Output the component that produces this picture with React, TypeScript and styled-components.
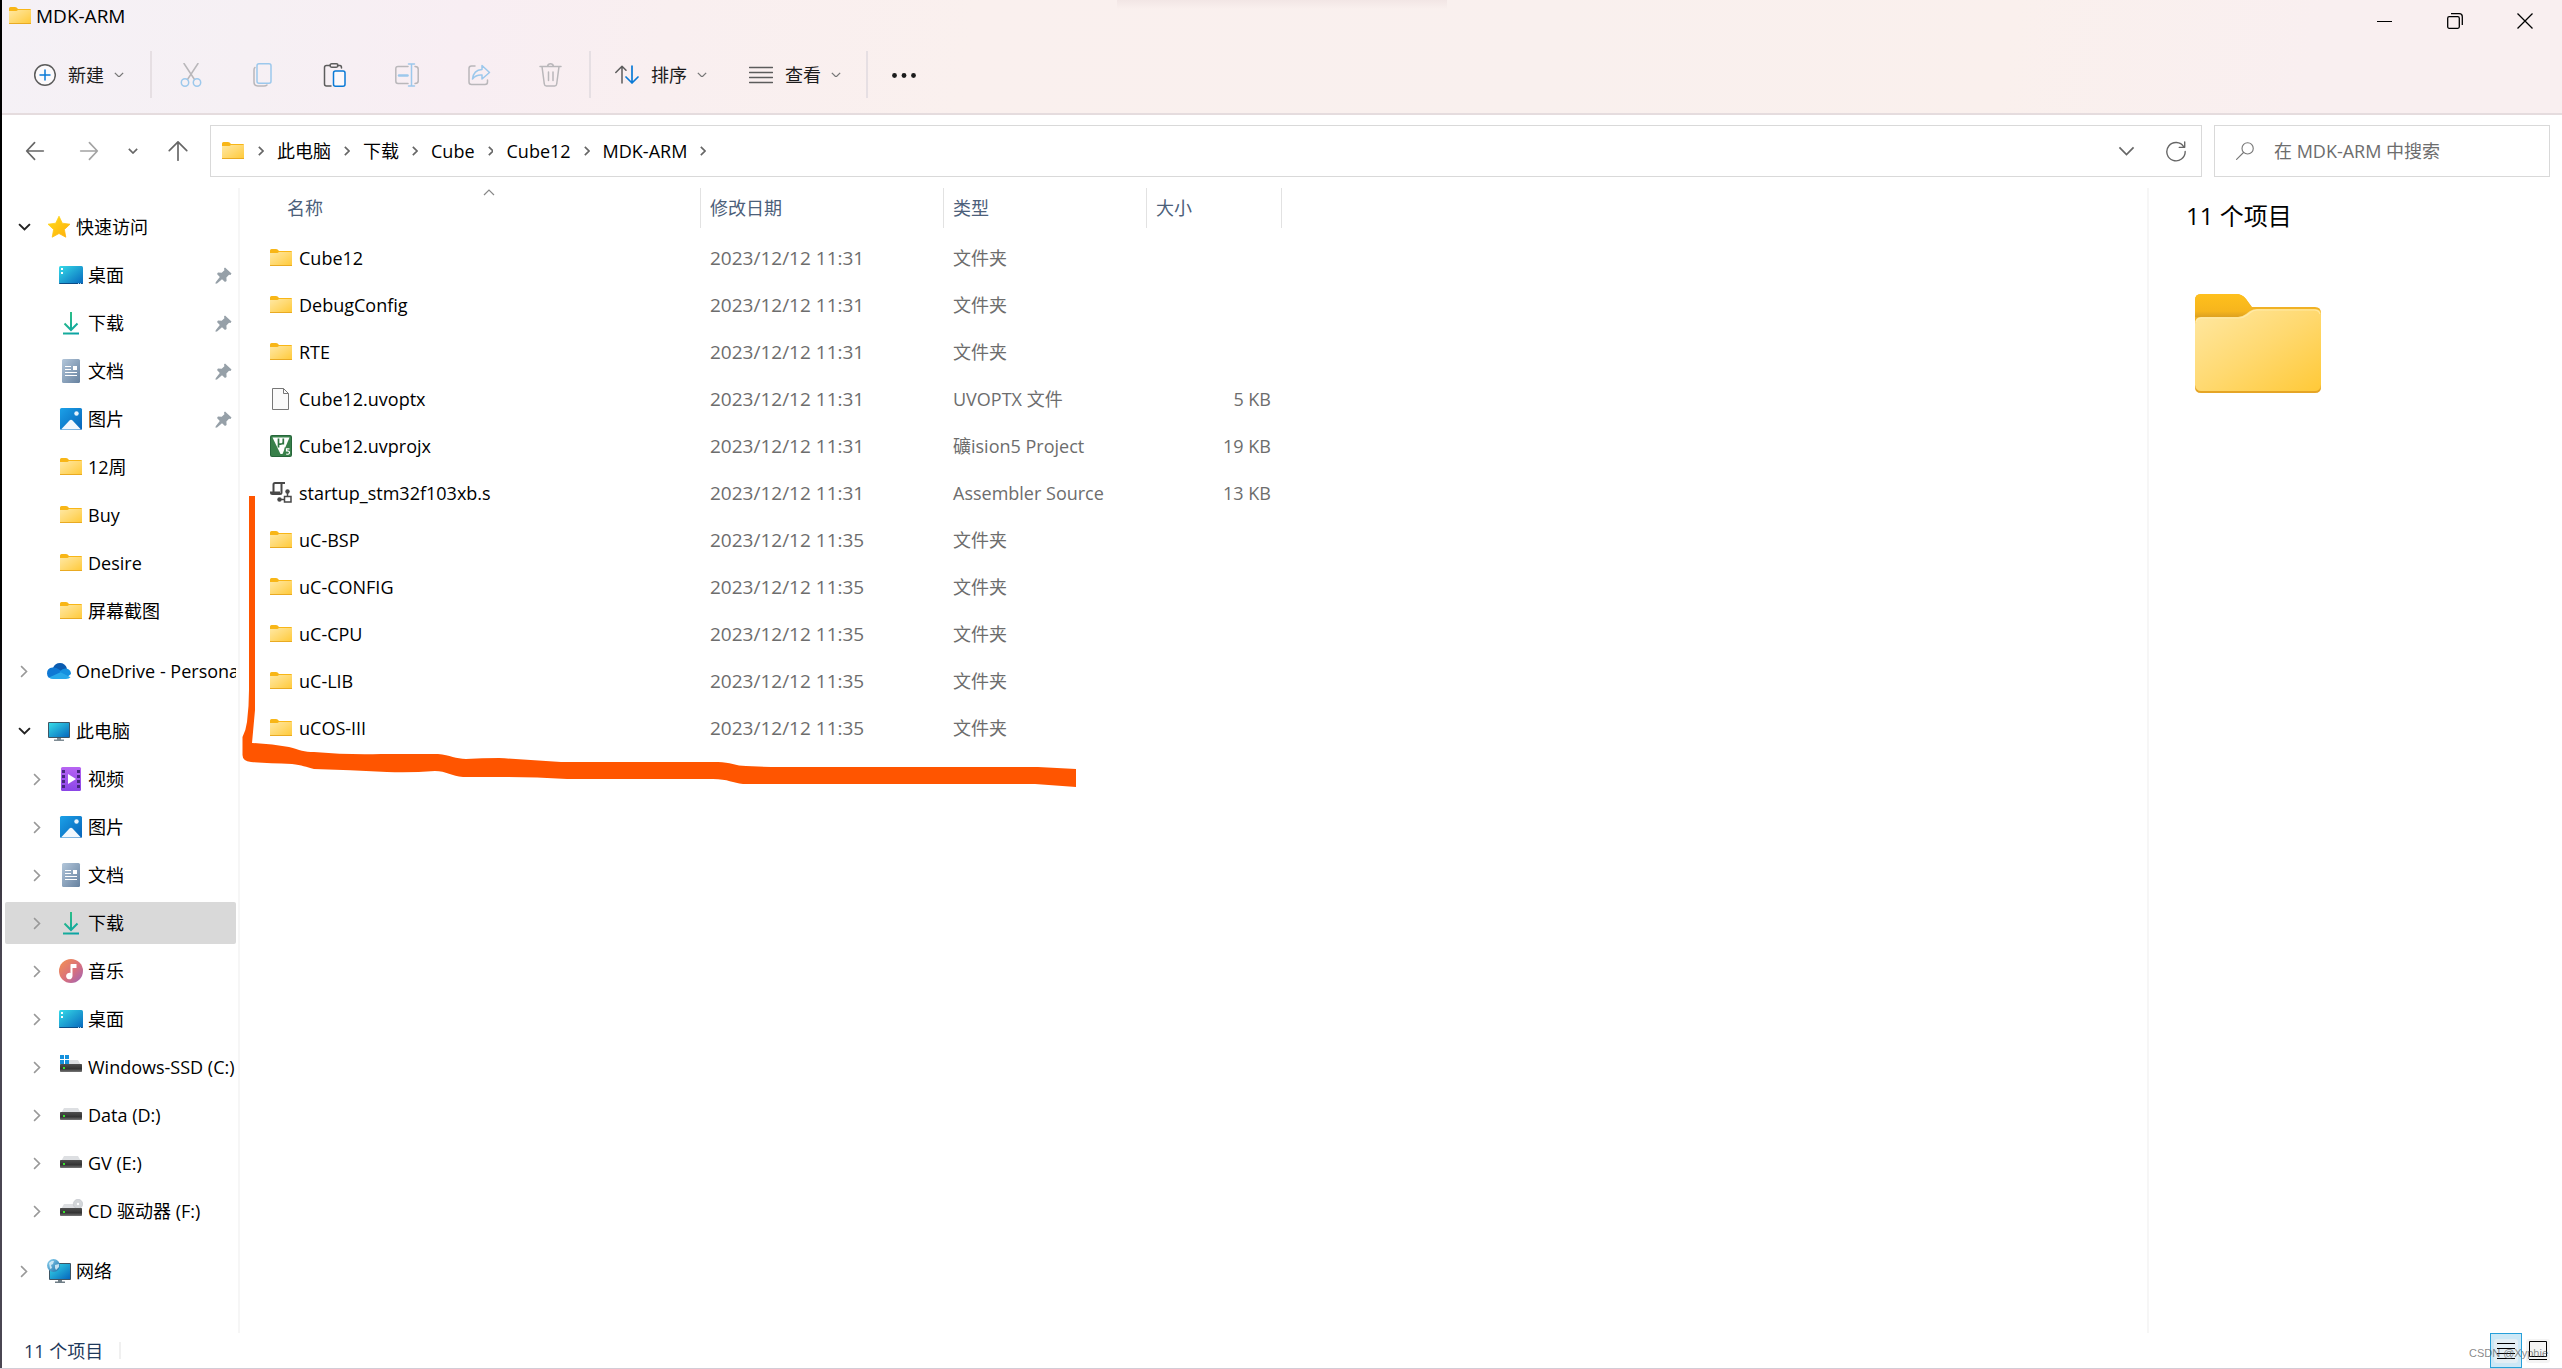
import React from "react";
import styled, { createGlobalStyle, css } from "styled-components";

const GlobalStyle = createGlobalStyle`
  * { box-sizing: border-box; }
  body {
    margin: 0;
    background: #fff;
    color: #000;
    font-family: "Open Sans", "Noto Sans CJK SC", sans-serif;
    font-size: 18px;
    line-height: 26px;
  }
  button, input { font: inherit; color: inherit; }
  svg { display: block; flex: none; }
`;

/* ---------- layout ---------- */

const Window = styled.div`
  position: relative;
  display: flex;
  flex-direction: column;
  min-height: 100vh;
  padding-left: 2px;
  background: linear-gradient(#000 0, #000 45%, #2a2630 57%, #4a4652 70%, #4a4652 100%) left / 2px 100% no-repeat;
  border-bottom: 1px solid #d3ccd6;
`;

const Chrome = styled.header`
  background:
    linear-gradient(#f2e6e5, rgba(249, 239, 238, 0)) top center / 330px 9px no-repeat,
    linear-gradient(100deg, #f5f1f6 0%, #f6f0f4 10%, #f8eef3 18%, #f9eff0 26%, #faf0ee 38%, #f9f0ee 60%, #faf0ed 78%, #f9eff0 90%, #f9eff0 100%);
  border-bottom: 2px solid #e5dcde;
`;

const TitleBar = styled.div`
  display: flex;
  justify-content: space-between;
  height: 42px;
  padding: 0 2px 0 6px;
`;

const Title = styled.h1`
  display: flex;
  align-items: center;
  gap: 4px;
  height: 32px;
  margin: 0;
  font-size: 19px;
  font-weight: 400;
`;

const CaptionButtons = styled.div`
  display: flex;
`;

const IconButton = styled.button<{ $w?: number }>`
  display: inline-flex;
  align-items: center;
  justify-content: center;
  flex: none;
  width: ${(p) => p.$w ?? 72}px;
  padding: 0;
  border: 0;
  background: none;
`;

const CommandBar = styled.div`
  display: flex;
  align-items: stretch;
  height: 71px;
  padding: 9px 0 15px;
`;

const Command = styled.button<{ $left: number; $right: number }>`
  display: flex;
  align-items: center;
  gap: 12px;
  padding: 0 ${(p) => p.$right}px 0 ${(p) => p.$left}px;
  border: 0;
  background: none;
  color: #1b1b1b;
  svg:last-child { margin-left: -2px; }
`;

const Divider = styled.span`
  width: 2px;
  margin: 0 3px 0 2px;
  background: #e6dfe3;
`;

const NavBar = styled.nav`
  display: flex;
  align-items: center;
  height: 73px;
  padding: 10px 12px 11px 6px;
`;

const AddressBox = styled.div`
  display: flex;
  align-items: center;
  flex: 1;
  height: 52px;
  margin: 0 12px 0 4px;
  padding: 0 0 0 10px;
  border: 1px solid #d9d9d9;
`;

const Crumbs = styled.ol`
  display: flex;
  align-items: center;
  flex: 1;
  margin: 0;
  padding: 0;
  list-style: none;
`;

const Crumb = styled.li`
  display: flex;
  align-items: center;
  a { color: #000; text-decoration: none; }
`;

const CrumbArrow = styled.span`
  display: flex;
  justify-content: center;
  width: 32px;
`;

const SearchBox = styled.label`
  display: flex;
  align-items: center;
  gap: 20px;
  width: 336px;
  height: 52px;
  padding: 0 21px;
  border: 1px solid #d9d9d9;
`;

const SearchInput = styled.input`
  flex: 1;
  min-width: 0;
  padding: 0;
  border: 0;
  outline: 0;
  background: none;
  &::placeholder { color: #6d6d6d; opacity: 1; }
`;

const Main = styled.div`
  display: flex;
  flex: 1;
`;

const Sidebar = styled.aside`
  flex: none;
  width: 238px;
  padding: 18px 2px 0 3px;
  border-right: 2px solid #f6f6f6;
`;

const Group = styled.ul`
  display: flex;
  flex-direction: column;
  gap: 6px;
  margin: 0 0 18px;
  padding: 0;
  list-style: none;
`;

const TreeRow = styled.li<{ $child?: boolean; $selected?: boolean }>`
  display: flex;
  align-items: center;
  height: 42px;
  padding-left: ${(p) => (p.$child ? 20 : 7)}px;
  border-radius: 2px;
  overflow: hidden;
  white-space: nowrap;
  ${(p) => p.$selected && css`background: #d9d9d9;`}
`;

const Toggle = styled.span`
  display: flex;
  justify-content: center;
  flex: none;
  width: 24px;
`;

const TreeIcon = styled.span<{ $child?: boolean }>`
  display: flex;
  flex: none;
  margin-left: ${(p) => (p.$child ? 10 : 11)}px;
  margin-right: 5px;
`;

const TreeLabel = styled.span`
  flex: 1;
  overflow: hidden;
`;

const PinSlot = styled.span`
  flex: none;
  padding-right: 4px;
`;

const Files = styled.main`
  flex: 1;
  min-width: 0;
`;

const FileTable = styled.table`
  table-layout: fixed;
  width: 1042px;
  border-spacing: 0;
  tbody::before { content: ""; display: block; height: 6px; }
`;

const HeadCell = styled.th<{ $w: number; $pad: number }>`
  position: relative;
  width: ${(p) => p.$w}px;
  height: 40px;
  padding: 0 0 0 ${(p) => p.$pad}px;
  border-right: 1px solid #e2e2e2;
  color: #4c607a;
  font-weight: 400;
  text-align: left;
`;

const SortMark = styled.span`
  position: absolute;
  top: 1px;
  left: 243px;
`;

const Cell = styled.td<{ $right?: boolean; $large?: boolean }>`
  height: 47px;
  padding: 0 ${(p) => (p.$right ? 11 : 0)}px 0 9px;
  color: #6d6d6d;
  font-size: ${(p) => (p.$large ? 19 : 18)}px;
  text-align: ${(p) => (p.$right ? "right" : "left")};
  white-space: nowrap;
`;

const NameCell = styled(Cell)`
  padding-left: 29px;
  color: #000;
`;

const FileName = styled.span`
  display: flex;
  align-items: center;
  gap: 6px;
`;

const Preview = styled.aside`
  flex: none;
  width: 415px;
  padding: 12px 37px;
  border-left: 2px solid #f6f6f6;
`;

const PreviewTitle = styled.h2`
  margin: 0 0 62px;
  font-size: 24px;
  font-weight: 400;
  line-height: 32px;
`;

const PreviewArt = styled.div`
  padding-left: 9px;
`;

const StatusBar = styled.footer`
  display: flex;
  align-items: center;
  justify-content: space-between;
  height: 35px;
  padding: 0 8px 0 22px;
  color: #1e395b;
`;

const StatusCount = styled.span`
  display: flex;
  align-items: center;
  gap: 16px;
  &::after { content: ""; width: 2px; height: 17px; background: #f0f0f0; }
`;

const ViewModes = styled.div`
  display: flex;
  align-self: stretch;
`;

const ViewButton = styled.button<{ $active?: boolean }>`
  display: flex;
  align-items: center;
  justify-content: center;
  width: 32px;
  padding: 0;
  border: 1px solid ${(p) => (p.$active ? "#26a0da" : "transparent")};
  background: ${(p) => (p.$active ? "#cce8f6" : "transparent")};
`;

const Watermark = styled.span`
  position: absolute;
  right: 14px;
  bottom: 5px;
  color: rgba(70, 70, 70, 0.65);
  font: 11px/20px "Liberation Sans", sans-serif;
  pointer-events: none;
`;

const InkMark = styled.svg`
  position: absolute;
  top: 490px;
  left: 240px;
  pointer-events: none;
`;

const SharedDefs = styled.svg`
  position: absolute;
`;

/* ---------- icons ---------- */

const Gradients = () => (
  <SharedDefs width="0" height="0" aria-hidden="true">
    <defs>
      <linearGradient id="folder" x1="0" y1="0" x2="1" y2="1">
        <stop offset="0" stopColor="#ffe8a3" />
        <stop offset=".5" stopColor="#ffd970" />
        <stop offset="1" stopColor="#ffc937" />
      </linearGradient>
      <linearGradient id="screen" x1="0" y1="0" x2="1" y2="1">
        <stop offset="0" stopColor="#36dbe8" />
        <stop offset="1" stopColor="#0667bd" />
      </linearGradient>
      <linearGradient id="down" gradientUnits="userSpaceOnUse" x1="4" y1="2" x2="20" y2="23">
        <stop offset="0" stopColor="#33c481" />
        <stop offset="1" stopColor="#08a0a8" />
      </linearGradient>
      <linearGradient id="doc" x1="0" y1="0" x2="1" y2="1">
        <stop offset="0" stopColor="#b2c6da" />
        <stop offset="1" stopColor="#66819f" />
      </linearGradient>
      <linearGradient id="photo" x1="0" y1="0" x2="1" y2="1">
        <stop offset="0" stopColor="#1ba1e8" />
        <stop offset="1" stopColor="#0863b8" />
      </linearGradient>
      <linearGradient id="video" x1="0" y1="0" x2="0" y2="1">
        <stop offset="0" stopColor="#b765f2" />
        <stop offset="1" stopColor="#8a45e6" />
      </linearGradient>
      <linearGradient id="music" x1="0" y1="0" x2="1" y2="1">
        <stop offset="0" stopColor="#f59350" />
        <stop offset=".55" stopColor="#d9707c" />
        <stop offset="1" stopColor="#9c62ba" />
      </linearGradient>
      <linearGradient id="star" x1="0" y1="0" x2="1" y2="1">
        <stop offset="0" stopColor="#ffdc1c" />
        <stop offset="1" stopColor="#ffae0a" />
      </linearGradient>
      <linearGradient id="drive" x1="0" y1="0" x2="0" y2="1">
        <stop offset="0" stopColor="#4f4f4f" />
        <stop offset=".6" stopColor="#333" />
        <stop offset="1" stopColor="#777" />
      </linearGradient>
      <linearGradient id="globe" x1="0" y1="0" x2="1" y2="1">
        <stop offset="0" stopColor="#8ed4f2" />
        <stop offset="1" stopColor="#1a6fa8" />
      </linearGradient>
      <linearGradient id="tab" x1="0" y1="0" x2="0" y2="1">
        <stop offset="0" stopColor="#ffc01c" />
        <stop offset=".75" stopColor="#f6b51d" />
        <stop offset="1" stopColor="#dda121" />
      </linearGradient>
    </defs>
  </SharedDefs>
);

const Folder = () => (
  <svg width="24" height="24" viewBox="0 0 24 24">
    <path d="M1 4.500Q1 3 2.500 3H7q1 0 1.600.6L10 5h12q1 0 1 1v2H1z" fill="#f8b617" />
    <path d="M1 7h7.500l1.500-1H23v14H1z" fill="url(#folder)" />
    <path d="M1 19h22v.5q0 .5-.5.500h-21q-.5 0-.5-.5z" fill="#e9aa22" />
  </svg>
);

const BigFolder = () => (
  <svg width="126" height="99" viewBox="0 0 126 99">
    <path d="M0 6Q0 0 6 0H41q6 0 10 5l6 8h63q6 0 6 6v20H0z" fill="#f0b124" />
    <path d="M0 6Q0 0 6 0H41q6 0 10 5l6 9q-6 9-14 9H0z" fill="url(#tab)" />
    <path d="M0 30q0-7 6-7H43q4 0 8-3l4-3q3-2 7-2h58q6 0 6 6v71q0 6-6 6H6q-6 0-6-6z" fill="url(#folder)" />
    <path d="M1 28q1-4 6-4H44q4 0 8-3l4-3q3-2 6-2h57q5 0 6 4" fill="none" stroke="#ffeeb4" strokeWidth="1.200" opacity=".7" />
    <path d="M0 91q1 6 6 6h114q5 0 6-6v2q0 6-6 6H6q-6 0-6-6z" fill="#e5a526" />
  </svg>
);

const Desktop = () => (
  <svg width="24" height="24" viewBox="0 0 24 24">
    <rect y="3" width="24" height="18" rx="1.500" fill="url(#screen)" />
    <path d="M0 20h24v.2q0 .8-1.200.8H1.200Q0 21 0 20.200z" fill="#0b4c86" />
    <path d="M2 5h2v2H2zM2 9h2v2H2z" fill="#fff" />
    <path d="M19 20h1v1h-1zM21 20h1v1h-1z" fill="#9fd4f5" />
  </svg>
);

const Download = () => (
  <svg width="24" height="24" viewBox="0 0 24 24" fill="none" stroke="url(#down)" strokeWidth="2">
    <path d="M12 1v18M5.500 12.500l6.500 6.500 6.500-6.500M4 22.500h16" />
  </svg>
);

const Doc = () => (
  <svg width="24" height="24" viewBox="0 0 24 24">
    <rect x="3" width="18" height="24" rx="1.500" fill="url(#doc)" />
    <path d="M6 7.500h6M6 10.500h6M6 13.500h12M6 16.500h12" stroke="#fff" strokeWidth="1.200" />
    <rect x="14" y="7" width="4" height="4" fill="#fff" />
  </svg>
);

const Photo = () => (
  <svg width="24" height="24" viewBox="0 0 24 24">
    <rect x="1" y="1" width="22" height="22" rx="1.500" fill="url(#photo)" />
    <path d="M2 22.500 10.500 13.500q1.500-1.500 3 0L22 22.500z" fill="#f3f8fd" />
    <circle cx="17.500" cy="6.500" r="2.200" fill="#e8f4fd" />
  </svg>
);

const Video = () => (
  <svg width="24" height="24" viewBox="0 0 24 24">
    <rect x="2" width="20" height="24" rx="1.500" fill="url(#video)" />
    <path d="M3 3h3v3H3zM3 8h3v3H3zM3 13h3v3H3zM3 18h3v3H3zM18 3h3v3h-3zM18 8h3v3h-3zM18 13h3v3h-3zM18 18h3v3h-3z" fill="#46287e" />
    <path d="M9 7l8 5-8 5z" fill="#fff" />
  </svg>
);

const Music = () => (
  <svg width="24" height="24" viewBox="0 0 24 24">
    <circle cx="12" cy="12" r="12" fill="url(#music)" />
    <path d="M12 5h5.500v4H13.500v8a3.200 3.200 0 1 1-2-2.900V5.500z" fill="#fff" />
  </svg>
);

const Star = () => (
  <svg width="24" height="24" viewBox="0 0 24 24">
    <path d="M12 1.200l3.300 7 7.700 1-5.600 5.300 1.400 7.700L12 18.500l-6.800 3.700 1.400-7.700L1 9.200l7.700-1z" fill="url(#star)" stroke="url(#star)" strokeWidth=".8" strokeLinejoin="round" />
  </svg>
);

const Cloud = () => (
  <svg width="24" height="24" viewBox="0 0 24 24">
    <path d="M6 9Q8 4 13 4q5 0 7 5.500L14 14z" fill="#0a5bb0" />
    <path d="M5.500 8.500Q9 8 12 10.500l5 3.500L2 19q-2-2-2-4.500 0-5.500 5.500-6z" fill="#0f78d4" />
    <path d="M12.500 12.500Q17 8 21 10q3 1.500 3 5l-5 4z" fill="#1590df" />
    <path d="M2 18.500l11.500-5.200 10 5Q22 20 19 20H6Q3.500 20 2 18.500z" fill="#28a8ea" />
  </svg>
);

const Monitor = () => (
  <svg width="24" height="24" viewBox="0 0 24 24">
    <rect x="1" y="3" width="22" height="16" rx="1" fill="#3e5565" />
    <rect x="2" y="4" width="20" height="14" fill="url(#screen)" />
    <path d="M10 19h4v1.500h3V22H7v-1.500h3z" fill="#7f8c94" />
  </svg>
);

const Drive = ({ kind }: { kind?: "system" | "disc" }) => (
  <svg width="24" height="24" viewBox="0 0 24 24">
    <path d="M5 5h14l4 7H1z" fill="#dddfe2" />
    {kind === "system" && (
      <>
        <path d="M0 0h10v9H0z" fill="#fff" />
        <path d="M1 0h4v4H1zM6 0h4v4H6zM1 5h4v4H1zM6 5h4v4H6z" fill="#1590dc" />
      </>
    )}
    {kind === "disc" && (
      <>
        <circle cx="19" cy="5" r="4.700" fill="#d3d6d9" stroke="#bfc3c7" strokeWidth=".6" />
        <circle cx="19" cy="5" r="1.200" fill="#fff" />
      </>
    )}
    <rect x="1" y="9" width="22" height="8" rx=".8" fill="url(#drive)" />
    <rect x="4" y="12" width="2" height="2" fill="#38e22c" />
  </svg>
);

const Network = () => (
  <svg width="24" height="24" viewBox="0 0 24 24">
    <rect x="2" y="4" width="22" height="17" rx="1" fill="#3e5565" />
    <rect x="3" y="5" width="20" height="15" fill="url(#screen)" />
    <path d="M11 21h4v1.500h3V24H8v-1.500h3z" fill="#6f7d86" />
    <circle cx="6.500" cy="6.500" r="6.500" fill="url(#globe)" />
    <path d="M2 4q3-3 5-2l-1 3-2 1 1 3-2 1zM8 6l4-1 0 3-3 3-1-2z" fill="#e3f4fb" opacity=".8" />
  </svg>
);

const Page = () => (
  <svg width="24" height="24" viewBox="0 0 24 24">
    <path d="M3.500 1.500h11l5 5v16h-16z" fill="#fafafa" stroke="#777" />
    <path d="M14.500 1.500v5h5" fill="none" stroke="#777" />
  </svg>
);

const UVision = () => (
  <svg width="24" height="24" viewBox="0 0 24 24">
    <rect x="1" y="1" width="22" height="22" rx="2" fill="#26663a" />
    <rect x="2" y="2" width="20" height="20" rx="1.500" fill="#38804a" />
    <path d="M3.500 3.500h17L13.500 20h-2z" fill="#fff" />
    <path d="M9.500 4.500v9M9.500 9.500q2.500 1.500 4.500-.500M14.300 4.500v6" fill="none" stroke="#2f7542" strokeWidth="1.700" />
    <rect x="15.500" y="13.500" width="6" height="8" fill="#38804a" />
    <path d="M20.500 14.800h-3v2.200q3-.3 3 1.600t-3.300 1.600" fill="none" stroke="#fff" strokeWidth="1.200" />
  </svg>
);

const Assembler = () => (
  <svg width="24" height="24" viewBox="0 0 24 24" fill="none" stroke="#484848" strokeWidth="2">
    <path d="M4.500 11.500V3.500Q4.500 2 6 2H16M12.500 3v8.500q0 1.500-1.500 1.500H3.500Q2 13 2 11.500h9" />
    <path d="M15.500 15.500h6.500v5.500h-6.500zM18.500 15v-3M15 18.500H11" strokeWidth="1.500" />
    <circle cx="18.500" cy="10.500" r="2.200" fill="#484848" stroke="none" />
    <circle cx="10.500" cy="18.500" r="2.200" fill="#484848" stroke="none" />
  </svg>
);

const Pin = () => (
  <svg width="17" height="17" viewBox="0 0 17 17">
    <path d="M10 .5 16.500 6.500 15.500 8l-1.500-.3-2.600 2.700.2 3.600-1.600 1L7 12.200l-5 4.300-1.500.2.200-1.500L4.800 10 2 7l1-1.500 3.700.200L9.400 3.200 9 1.500z" fill="#96a0a8" />
  </svg>
);

const Chevron = ({ dir, size, color, weight = 1.5 }: { dir: "down" | "right" | "up"; size: number; color: string; weight?: number }) => {
  const d = {
    down: "M1 1 6 6 11 1",
    right: "M1 1 6 6 1 11",
    up: "M1 6 6 1 11 6",
  }[dir];
  const w = dir === "right" ? 7 : 12;
  const h = dir === "right" ? 12 : 7;
  return (
    <svg width={(size * w) / 12} height={(size * h) / 12} viewBox={`0 0 ${w} ${h}`} fill="none" stroke={color} strokeWidth={weight}>
      <path d={d} />
    </svg>
  );
};

const Stroke = ({ children, size = 24, color = "#5c5c5c", weight = 1.5 }: { children: React.ReactNode; size?: number; color?: string; weight?: number }) => (
  <svg width={size} height={size} viewBox="0 0 24 24" fill="none" stroke={color} strokeWidth={weight} strokeLinecap="round" strokeLinejoin="round">
    {children}
  </svg>
);

const PALE = "#b9b7ba";
const PALE_BLUE = "#9cc8ec";
const BLUE = "#0a7ad6";

const NewIcon = () => (
  <Stroke>
    <circle cx="13" cy="12" r="10.300" fill="#fcfafc" />
    <path d="M13 7v10M8 12h10" stroke={BLUE} />
  </Stroke>
);
const CutIcon = () => (
  <Stroke color={PALE}>
    <path d="M5 .5 15.500 16.500M19 .5 8.500 16.500" />
    <circle cx="6" cy="19.500" r="3.700" stroke={PALE_BLUE} />
    <circle cx="18" cy="19.500" r="3.700" stroke={PALE_BLUE} />
  </Stroke>
);
const CopyIcon = () => (
  <Stroke color={PALE}>
    <path d="M4 4.500Q3 5 3 7v12q0 4 4 4h6q2 0 3-1" />
    <rect x="6" y=".8" width="14" height="19.500" rx="2" stroke={PALE_BLUE} />
  </Stroke>
);
const PasteIcon = () => (
  <Stroke>
    <path d="M7 2.500H3.500q-2 0-2 2V21q0 2 2 2H8M14.500 2.500H17q1.500 0 1.500 2.500" />
    <rect x="7" y=".8" width="8" height="3.400" rx="1.700" />
    <rect x="10.500" y="8" width="11.500" height="15.200" rx="2" stroke={BLUE} fill="#fbf8fb" />
  </Stroke>
);
const RenameIcon = () => (
  <Stroke color={PALE}>
    <path d="M13 3.500H3q-2.200 0-2.200 2.500v12q0 2.500 2.200 2.500h10M20 3.500q3.200 0 3.200 2.500v12q0 2.500-3.200 2.500" />
    <path d="M13.500 1h6M13.500 23h6M16.500 1v22" stroke={PALE_BLUE} />
    <path d="M4 12.500h8.500" stroke={PALE_BLUE} strokeWidth="2.500" />
  </Stroke>
);
const ShareIcon = () => (
  <Stroke color={PALE}>
    <path d="M8 3H4.500Q2 3 2 5.500V19q0 2.500 2.500 2.500H18q2.500 0 2.500-2.500v-2" />
    <path d="M15 2.500 22.500 9.500 15 16v-4Q9 11.500 5.500 16 6.500 7 15 6.500z" stroke={PALE_BLUE} />
  </Stroke>
);
const TrashIcon = () => (
  <Stroke color={PALE}>
    <path d="M1 3.500h21M3 3.500 5.300 21q.3 2 2 2h8.400q1.700 0 2-2L20 3.500M8.500 3.500Q9 .8 11.500.8t3 2.700M9.500 9v8.500M14 9v8.500" />
  </Stroke>
);
const SortIcon = () => (
  <Stroke>
    <path d="M7 20V3.500M.8 9.500 7 3.300 11 7.300" />
    <path d="M17 3v17M11 14l6 6 6-6" stroke={BLUE} strokeWidth="1.700" />
  </Stroke>
);
const ViewIcon = () => (
  <Stroke>
    <path d="M.5 4.500h23M.5 9.500h23M.5 14.500h23M.5 19.500h23" />
  </Stroke>
);

const icons = {
  folder: <Folder />, star: <Star />, desktop: <Desktop />, download: <Download />, doc: <Doc />,
  photo: <Photo />, cloud: <Cloud />, monitor: <Monitor />, video: <Video />, music: <Music />,
  system: <Drive kind="system" />, drive: <Drive />, disc: <Drive kind="disc" />, network: <Network />,
  page: <Page />, uvision: <UVision />, assembler: <Assembler />,
};
type IconName = keyof typeof icons;

/* ---------- data ---------- */

type Node = { label: string; icon: IconName; pinned?: boolean; selected?: boolean };
type Section = Node & { open: boolean; expandable: boolean; items: Node[] };

const sections: Section[] = [
  {
    label: "快速访问", icon: "star", open: true, expandable: false,
    items: [
      { label: "桌面", icon: "desktop", pinned: true },
      { label: "下载", icon: "download", pinned: true },
      { label: "文档", icon: "doc", pinned: true },
      { label: "图片", icon: "photo", pinned: true },
      { label: "12周", icon: "folder" },
      { label: "Buy", icon: "folder" },
      { label: "Desire", icon: "folder" },
      { label: "屏幕截图", icon: "folder" },
    ],
  },
  { label: "OneDrive - Personal", icon: "cloud", open: false, expandable: true, items: [] },
  {
    label: "此电脑", icon: "monitor", open: true, expandable: true,
    items: [
      { label: "视频", icon: "video" },
      { label: "图片", icon: "photo" },
      { label: "文档", icon: "doc" },
      { label: "下载", icon: "download", selected: true },
      { label: "音乐", icon: "music" },
      { label: "桌面", icon: "desktop" },
      { label: "Windows-SSD (C:)", icon: "system" },
      { label: "Data (D:)", icon: "drive" },
      { label: "GV (E:)", icon: "drive" },
      { label: "CD 驱动器 (F:)", icon: "disc" },
    ],
  },
  { label: "网络", icon: "network", open: false, expandable: true, items: [] },
];

const crumbs = ["此电脑", "下载", "Cube", "Cube12", "MDK-ARM"];

const files: { name: string; icon: IconName; date: string; type: string; size?: string }[] = [
  { name: "Cube12", icon: "folder", date: "2023/12/12 11:31", type: "文件夹" },
  { name: "DebugConfig", icon: "folder", date: "2023/12/12 11:31", type: "文件夹" },
  { name: "RTE", icon: "folder", date: "2023/12/12 11:31", type: "文件夹" },
  { name: "Cube12.uvoptx", icon: "page", date: "2023/12/12 11:31", type: "UVOPTX 文件", size: "5 KB" },
  { name: "Cube12.uvprojx", icon: "uvision", date: "2023/12/12 11:31", type: "礦ision5 Project", size: "19 KB" },
  { name: "startup_stm32f103xb.s", icon: "assembler", date: "2023/12/12 11:31", type: "Assembler Source", size: "13 KB" },
  { name: "uC-BSP", icon: "folder", date: "2023/12/12 11:35", type: "文件夹" },
  { name: "uC-CONFIG", icon: "folder", date: "2023/12/12 11:35", type: "文件夹" },
  { name: "uC-CPU", icon: "folder", date: "2023/12/12 11:35", type: "文件夹" },
  { name: "uC-LIB", icon: "folder", date: "2023/12/12 11:35", type: "文件夹" },
  { name: "uCOS-III", icon: "folder", date: "2023/12/12 11:35", type: "文件夹" },
];

/* ---------- page ---------- */

export default function App() {
  return (
    <>
      <GlobalStyle />
      <Gradients />
      <Window lang="zh-CN">
        <Chrome>
          <TitleBar>
            <Title><Folder />MDK-ARM</Title>
            <CaptionButtons>
              <IconButton $w={70} aria-label="最小化">
                <svg width="16" height="16" viewBox="0 0 16 16"><path d="M0 8.500h15" stroke="#000" /></svg>
              </IconButton>
              <IconButton $w={70} aria-label="还原">
                <svg width="16" height="16" viewBox="0 0 16 16" fill="none" stroke="#000" strokeWidth="1.300">
                  <rect x=".7" y="3.700" width="11.600" height="11.600" rx="1.500" />
                  <path d="M4 .7h8.300q3 0 3 3V12" />
                </svg>
              </IconButton>
              <IconButton $w={70} aria-label="关闭">
                <svg width="16" height="16" viewBox="0 0 16 16"><path d="M.5.5l15 15M15.500.5l-15 15" stroke="#000" strokeWidth="1.300" /></svg>
              </IconButton>
            </CaptionButtons>
          </TitleBar>
          <CommandBar>
            <Command $left={30} $right={24}><NewIcon />新建<Chevron dir="down" size={10} color="#777" /></Command>
            <Divider />
            <IconButton aria-label="剪切"><CutIcon /></IconButton>
            <IconButton aria-label="复制"><CopyIcon /></IconButton>
            <IconButton aria-label="粘贴"><PasteIcon /></IconButton>
            <IconButton aria-label="重命名"><RenameIcon /></IconButton>
            <IconButton aria-label="共享"><ShareIcon /></IconButton>
            <IconButton aria-label="删除"><TrashIcon /></IconButton>
            <Divider />
            <Command $left={21} $right={21}><SortIcon />排序<Chevron dir="down" size={10} color="#777" /></Command>
            <Command $left={21} $right={23}><ViewIcon />查看<Chevron dir="down" size={10} color="#777" /></Command>
            <Divider />
            <IconButton $w={66} aria-label="查看更多">
              <svg width="24" height="24" viewBox="0 0 24 24" fill="#1b1b1b">
                <circle cx="2.500" cy="12.500" r="2.400" /><circle cx="12" cy="12.500" r="2.400" /><circle cx="21.500" cy="12.500" r="2.400" />
              </svg>
            </IconButton>
          </CommandBar>
        </Chrome>

        <NavBar>
          <IconButton $w={54} aria-label="后退">
            <Stroke size={20} color="#666" weight={2}><path d="M22 12H2M11.500 2 2 12l9.500 10" /></Stroke>
          </IconButton>
          <IconButton $w={54} aria-label="前进">
            <Stroke size={20} color="#a3a3a3" weight={2}><path d="M2 12h20M12.500 2 22 12l-9.500 10" /></Stroke>
          </IconButton>
          <IconButton $w={34} aria-label="最近浏览的位置"><Chevron dir="down" size={10} color="#666" weight={2} /></IconButton>
          <IconButton $w={56} aria-label="上移">
            <Stroke size={20} color="#666" weight={2}><path d="M12 23V1M1.500 11.500 12 1l10.500 10.500" /></Stroke>
          </IconButton>
          <AddressBox>
            <Crumbs>
              <Crumb><Folder /></Crumb>
              {crumbs.map((c) => (
                <Crumb key={c}>
                  <CrumbArrow><Chevron dir="right" size={10} color="#666" weight={2} /></CrumbArrow>
                  <a href="#">{c}</a>
                </Crumb>
              ))}
              <Crumb><CrumbArrow><Chevron dir="right" size={10} color="#666" weight={2} /></CrumbArrow></Crumb>
            </Crumbs>
            <IconButton $w={50} aria-label="以前的位置"><Chevron dir="down" size={17} color="#666" weight={1.2} /></IconButton>
            <IconButton $w={50} aria-label="刷新">
              <Stroke size={22} color="#666"><path d="M20.500 7.500A10 10 0 1 0 22 12.500M21.500 2v6h-6" /></Stroke>
            </IconButton>
          </AddressBox>
          <SearchBox>
            <Stroke size={18} color="#777" weight={1.5}><circle cx="15.500" cy="8.500" r="7.500" /><path d="M10 14 .8 23.200" /></Stroke>
            <SearchInput type="search" placeholder="在 MDK-ARM 中搜索" aria-label="搜索" />
          </SearchBox>
        </NavBar>

        <Main>
          <Sidebar>
            {sections.map((s) => (
              <Group key={s.label}>
                <TreeRow>
                  <Toggle>
                    {s.open ? <Chevron dir="down" size={13} color="#222" weight={1.8} /> : <Chevron dir="right" size={13} color="#999" />}
                  </Toggle>
                  <TreeIcon>{icons[s.icon]}</TreeIcon>
                  <TreeLabel>{s.label}</TreeLabel>
                </TreeRow>
                {s.items.map((n) => (
                  <TreeRow key={n.label} $child $selected={n.selected}>
                    <Toggle>{s.expandable && <Chevron dir="right" size={13} color="#999" />}</Toggle>
                    <TreeIcon $child>{icons[n.icon]}</TreeIcon>
                    <TreeLabel>{n.label}</TreeLabel>
                    {n.pinned && <PinSlot><Pin /></PinSlot>}
                  </TreeRow>
                ))}
              </Group>
            ))}
          </Sidebar>

          <Files>
            <FileTable>
              <thead>
                <tr>
                  <HeadCell $w={461} $pad={47}>
                    名称
                    <SortMark><Chevron dir="up" size={12} color="#888" weight={1.2} /></SortMark>
                  </HeadCell>
                  <HeadCell $w={243} $pad={9}>修改日期</HeadCell>
                  <HeadCell $w={203} $pad={9}>类型</HeadCell>
                  <HeadCell $w={135} $pad={9}>大小</HeadCell>
                </tr>
              </thead>
              <tbody>
                {files.map((f) => (
                  <tr key={f.name}>
                    <NameCell><FileName>{icons[f.icon]}{f.name}</FileName></NameCell>
                    <Cell $large>{f.date}</Cell>
                    <Cell>{f.type}</Cell>
                    <Cell $right>{f.size}</Cell>
                  </tr>
                ))}
              </tbody>
            </FileTable>
          </Files>

          <Preview>
            <PreviewTitle>11 个项目</PreviewTitle>
            <PreviewArt><BigFolder /></PreviewArt>
          </Preview>
        </Main>

        <StatusBar>
          <StatusCount>11 个项目</StatusCount>
          <ViewModes>
            <ViewButton $active aria-label="详细信息">
              <svg width="24" height="24" viewBox="0 0 24 24">
                <rect width="24" height="24" rx="3" fill="#e3eef4" />
                <path d="M3 4.500h18M3 9.500h18M3 14.500h18M3 19.500h18" stroke="#000" />
              </svg>
            </ViewButton>
            <ViewButton aria-label="大图标">
              <svg width="24" height="24" viewBox="0 0 24 24">
                <rect width="24" height="24" rx="3" fill="#f4f4f4" />
                <path d="M3.500 2.500h17v15h-17zM3 20.500h18" fill="none" stroke="#000" />
              </svg>
            </ViewButton>
          </ViewModes>
        </StatusBar>

        <InkMark width="840" height="300" viewBox="240 490 840 300" aria-hidden="true">
          <path
            fill="#ff5500"
            d="M249 496H255V710L252 743Q272 744 289 747C300 750 304 752 314 752Q348 755 381 754H438C450 755 456 759 466 759Q482 758 499 758Q530 760 561 762H718C730 762 736 766 746 766L771 767H1038L1076 769V787L1035 784H743C733 783 728 779 713 779H567Q535 777 505 777H463C452 776 446 771 435 771Q410 773 387 772Q350 770 314 769C306 767 302 765 292 764Q268 763 251 762Q242.500 761 242.500 755V737Q246 730 247 722Q249 706 249 690Z"
          />
        </InkMark>
        <Watermark>CSDN @Xyphie</Watermark>
      </Window>
    </>
  );
}
